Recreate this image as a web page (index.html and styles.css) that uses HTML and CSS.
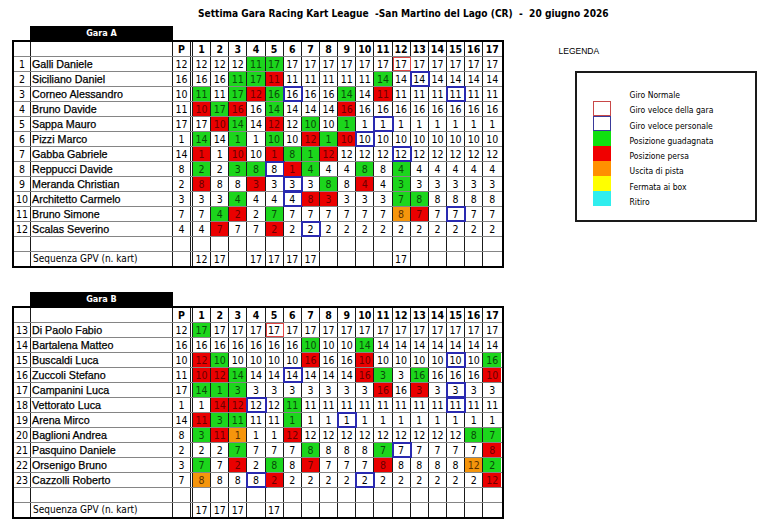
FILE: index.html
```html
<!DOCTYPE html>
<html lang="it">
<head>
<meta charset="utf-8">
<title>Settima Gara Racing Kart League</title>
<link rel="stylesheet" href="styles.css">
</head>
<body>
<div class="title">Settima Gara Racing Kart League  -San Martino del Lago (CR)  -  20 giugno 2026</div>
<div class="main">
  <div class="tables">
    <div class="bar">Gara A</div>
    <div class="sheet">
      <div class="row head"><span></span><span></span><span>P</span><span>1</span><span>2</span><span>3</span><span>4</span><span>5</span><span>6</span><span>7</span><span>8</span><span>9</span><span>10</span><span>11</span><span>12</span><span>13</span><span>14</span><span>15</span><span>16</span><span>17</span></div>
      <div class="row"><span>1</span><span class="nm">Galli Daniele</span><span>12</span><span>12</span><span>12</span><span>12</span><span class="g">11</span><span class="g">17</span><span>17</span><span>17</span><span>17</span><span>17</span><span>17</span><span>17</span><span class="f">17</span><span>17</span><span>17</span><span>17</span><span>17</span><span>17</span></div>
      <div class="row"><span>2</span><span class="nm">Siciliano Daniel</span><span>16</span><span>16</span><span>16</span><span class="g">11</span><span class="g">17</span><span class="r">11</span><span>11</span><span>11</span><span>11</span><span>11</span><span>11</span><span class="g">14</span><span>14</span><span class="b">14</span><span>14</span><span>14</span><span>14</span><span>14</span></div>
      <div class="row"><span>3</span><span class="nm">Corneo Alessandro</span><span>10</span><span class="g">11</span><span>11</span><span class="g">17</span><span class="r">12</span><span class="g">16</span><span class="b">16</span><span>16</span><span>16</span><span class="g">14</span><span>14</span><span class="r">11</span><span>11</span><span>11</span><span>11</span><span class="b">11</span><span>11</span><span>11</span></div>
      <div class="row"><span>4</span><span class="nm">Bruno Davide</span><span>11</span><span class="r">10</span><span class="g">17</span><span class="r">16</span><span>16</span><span class="g">14</span><span>14</span><span>14</span><span>14</span><span class="r">16</span><span>16</span><span>16</span><span>16</span><span>16</span><span>16</span><span>16</span><span>16</span><span>16</span></div>
      <div class="row"><span>5</span><span class="nm">Sappa Mauro</span><span>17</span><span>17</span><span class="r">10</span><span class="g">14</span><span>14</span><span class="r">12</span><span>12</span><span class="g">10</span><span>10</span><span class="g">1</span><span>1</span><span class="b">1</span><span>1</span><span>1</span><span>1</span><span>1</span><span>1</span><span>1</span></div>
      <div class="row"><span>6</span><span class="nm">Pizzi Marco</span><span>1</span><span class="g">14</span><span>14</span><span class="g">1</span><span>1</span><span class="g">10</span><span>10</span><span class="r">12</span><span class="g">1</span><span class="r">10</span><span class="b">10</span><span>10</span><span>10</span><span>10</span><span>10</span><span>10</span><span>10</span><span>10</span></div>
      <div class="row"><span>7</span><span class="nm">Gabba Gabriele</span><span>14</span><span class="r">1</span><span>1</span><span class="r">10</span><span>10</span><span class="r">1</span><span class="g">8</span><span class="g">1</span><span class="r">12</span><span>12</span><span>12</span><span>12</span><span class="b">12</span><span>12</span><span>12</span><span>12</span><span>12</span><span>12</span></div>
      <div class="row"><span>8</span><span class="nm">Reppucci Davide</span><span>8</span><span class="g">2</span><span>2</span><span class="g">3</span><span class="g">8</span><span class="b">8</span><span class="r">1</span><span class="g">4</span><span>4</span><span>4</span><span class="g">8</span><span>8</span><span class="g">4</span><span>4</span><span>4</span><span>4</span><span>4</span><span>4</span></div>
      <div class="row"><span>9</span><span class="nm">Meranda Christian</span><span>2</span><span class="r">8</span><span>8</span><span>8</span><span class="r">3</span><span>3</span><span class="b">3</span><span>3</span><span class="g">8</span><span>8</span><span class="r">4</span><span>4</span><span class="g">3</span><span>3</span><span>3</span><span>3</span><span>3</span><span>3</span></div>
      <div class="row"><span>10</span><span class="nm">Architetto Carmelo</span><span>3</span><span>3</span><span>3</span><span class="g">4</span><span>4</span><span>4</span><span class="b">4</span><span class="r">8</span><span class="r">3</span><span>3</span><span>3</span><span>3</span><span class="g">7</span><span class="g">8</span><span>8</span><span>8</span><span>8</span><span>8</span></div>
      <div class="row"><span>11</span><span class="nm">Bruno Simone</span><span>7</span><span>7</span><span class="g">4</span><span class="r">2</span><span>2</span><span class="g">7</span><span>7</span><span>7</span><span>7</span><span>7</span><span>7</span><span>7</span><span class="o">8</span><span class="r">7</span><span>7</span><span class="b">7</span><span>7</span><span>7</span></div>
      <div class="row"><span>12</span><span class="nm">Scalas Severino</span><span>4</span><span>4</span><span class="r">7</span><span>7</span><span>7</span><span class="r">2</span><span>2</span><span class="b">2</span><span>2</span><span>2</span><span>2</span><span>2</span><span>2</span><span>2</span><span>2</span><span>2</span><span>2</span><span>2</span></div>
      <div class="row"><span></span><span></span><span></span><span></span><span></span><span></span><span></span><span></span><span></span><span></span><span></span><span></span><span></span><span></span><span></span><span></span><span></span><span></span><span></span><span></span></div>
      <div class="row"><span></span><span class="nm sq">Sequenza GPV (n. kart)</span><span></span><span>12</span><span>17</span><span></span><span>17</span><span>17</span><span>17</span><span>17</span><span></span><span></span><span></span><span></span><span>17</span><span></span><span></span><span></span><span></span><span></span></div>
    </div>

    <div class="bar bar-b">Gara B</div>
    <div class="sheet">
      <div class="row head"><span></span><span></span><span>P</span><span>1</span><span>2</span><span>3</span><span>4</span><span>5</span><span>6</span><span>7</span><span>8</span><span>9</span><span>10</span><span>11</span><span>12</span><span>13</span><span>14</span><span>15</span><span>16</span><span>17</span></div>
      <div class="row"><span>13</span><span class="nm">Di Paolo Fabio</span><span>12</span><span class="g">17</span><span>17</span><span>17</span><span>17</span><span class="f">17</span><span>17</span><span>17</span><span>17</span><span>17</span><span>17</span><span>17</span><span>17</span><span>17</span><span>17</span><span>17</span><span>17</span><span>17</span></div>
      <div class="row"><span>14</span><span class="nm">Bartalena Matteo</span><span>16</span><span>16</span><span>16</span><span>16</span><span>16</span><span>16</span><span>16</span><span class="g">10</span><span>10</span><span>10</span><span class="g">14</span><span>14</span><span>14</span><span>14</span><span>14</span><span>14</span><span>14</span><span>14</span></div>
      <div class="row"><span>15</span><span class="nm">Buscaldi Luca</span><span>10</span><span class="r">12</span><span class="g">10</span><span>10</span><span>10</span><span>10</span><span>10</span><span class="r">16</span><span>16</span><span>16</span><span class="r">10</span><span>10</span><span>10</span><span>10</span><span>10</span><span class="b">10</span><span>10</span><span class="g">16</span></div>
      <div class="row"><span>16</span><span class="nm">Zuccoli Stefano</span><span>11</span><span class="r">10</span><span class="r">12</span><span class="g">14</span><span>14</span><span>14</span><span class="b">14</span><span>14</span><span>14</span><span>14</span><span class="r">16</span><span class="g">3</span><span>3</span><span class="g">16</span><span>16</span><span>16</span><span>16</span><span class="r">10</span></div>
      <div class="row"><span>17</span><span class="nm">Campanini Luca</span><span>17</span><span class="g">14</span><span class="g">1</span><span class="g">3</span><span>3</span><span>3</span><span>3</span><span>3</span><span>3</span><span>3</span><span>3</span><span class="r">16</span><span>16</span><span class="r">3</span><span>3</span><span class="b">3</span><span>3</span><span>3</span></div>
      <div class="row"><span>18</span><span class="nm">Vettorato Luca</span><span>1</span><span>1</span><span class="r">14</span><span class="r">12</span><span class="b">12</span><span>12</span><span class="g">11</span><span>11</span><span>11</span><span>11</span><span>11</span><span>11</span><span>11</span><span>11</span><span>11</span><span class="b">11</span><span>11</span><span>11</span></div>
      <div class="row"><span>19</span><span class="nm">Arena Mirco</span><span>14</span><span class="r">11</span><span class="g">3</span><span class="g">11</span><span>11</span><span>11</span><span class="g">1</span><span>1</span><span>1</span><span class="b">1</span><span>1</span><span>1</span><span>1</span><span>1</span><span>1</span><span>1</span><span>1</span><span>1</span></div>
      <div class="row"><span>20</span><span class="nm">Baglioni Andrea</span><span>8</span><span class="g">3</span><span class="r">11</span><span class="o">1</span><span>1</span><span>1</span><span class="r">12</span><span>12</span><span>12</span><span>12</span><span>12</span><span>12</span><span>12</span><span>12</span><span>12</span><span>12</span><span class="g">8</span><span class="g">7</span></div>
      <div class="row"><span>21</span><span class="nm">Pasquino Daniele</span><span>2</span><span>2</span><span>2</span><span class="g">7</span><span>7</span><span>7</span><span>7</span><span class="g">8</span><span>8</span><span>8</span><span>8</span><span class="g">7</span><span class="b">7</span><span>7</span><span>7</span><span>7</span><span>7</span><span class="r">8</span></div>
      <div class="row"><span>22</span><span class="nm">Orsenigo Bruno</span><span>3</span><span class="g">7</span><span>7</span><span class="r">2</span><span>2</span><span class="g">8</span><span>8</span><span class="r">7</span><span>7</span><span>7</span><span>7</span><span class="r">8</span><span>8</span><span>8</span><span>8</span><span>8</span><span class="o">12</span><span class="g">2</span></div>
      <div class="row"><span>23</span><span class="nm">Cazzolli Roberto</span><span>7</span><span class="o">8</span><span>8</span><span>8</span><span class="b">8</span><span class="r">2</span><span>2</span><span>2</span><span>2</span><span>2</span><span class="b">2</span><span>2</span><span>2</span><span>2</span><span>2</span><span>2</span><span>2</span><span class="r">12</span></div>
      <div class="row"><span></span><span></span><span></span><span></span><span></span><span></span><span></span><span></span><span></span><span></span><span></span><span></span><span></span><span></span><span></span><span></span><span></span><span></span><span></span><span></span></div>
      <div class="row"><span></span><span class="nm sq">Sequenza GPV (n. kart)</span><span></span><span>17</span><span>17</span><span>17</span><span></span><span>17</span><span></span><span></span><span></span><span></span><span></span><span></span><span></span><span></span><span></span><span></span><span></span><span></span></div>
    </div>
  </div>

  <div class="legend">
    <div class="legend-title">LEGENDA</div>
    <div class="legend-box">
      <div class="swatches">
        <div class="sw sw-fast"></div>
        <div class="sw sw-pers"></div>
        <div class="sw sw-g"></div>
        <div class="sw sw-r"></div>
        <div class="sw sw-o"></div>
        <div class="sw sw-y"></div>
        <div class="sw sw-c"></div>
      </div>
      <div class="labels">
        <div class="lb">Giro Normale</div>
        <div class="lb">Giro veloce della gara</div>
        <div class="lb">Giro veloce personale</div>
        <div class="lb">Posizione guadagnata</div>
        <div class="lb">Posizione persa</div>
        <div class="lb">Uscita di pista</div>
        <div class="lb">Fermata ai box</div>
        <div class="lb">Ritiro</div>
      </div>
    </div>
  </div>
</div>
</body>
</html>
```

FILE: styles.css
```css
* { box-sizing: border-box; }
body {
  margin: 0;
  background: #fff;
  color: #000;
  font-family: "DejaVu Sans Condensed", "DejaVu Sans", sans-serif;
  font-stretch: condensed;
}
.title {
  height: 26px;
  padding: 8px 0 0 198px;
  font-size: 10.1px;
  line-height: 12px;
  font-weight: bold;
  white-space: pre;
}
.main { display: flex; padding-left: 12px; }
.tables { display: flex; flex-direction: column; }
.bar {
  margin-left: 18px;
  width: 143px;
  height: 14px;
  background: #000;
  color: #fff;
  font-size: 9px;
  line-height: 14px;
  font-weight: bold;
  text-align: center;
}
.bar-b { margin-top: 24px; }
.sheet { width: 491.55px; border: 2px solid #000; }
.row {
  display: grid;
  grid-template-columns: 17px 142px 20px repeat(17, 18.15px);
  height: 15px;
  border-bottom: 1px solid #858585;
  font-size: 10.5px;
}
.row:last-child { height: 14px; border-bottom: 0; }
.row > span {
  display: flex;
  align-items: center;
  justify-content: center;
  border-right: 1px solid #1a1a1a;
  line-height: 1;
  white-space: nowrap;
}
.row > span:nth-child(3) { border-right: 3px double #1a1a1a; }
.row > span:last-child { border-right: 0; }
.head { font-weight: bold; }
.row > .nm {
  justify-content: flex-start;
  padding-left: 1px;
  font-family: "Liberation Sans", Arial, sans-serif;
  font-stretch: normal;
  font-size: 10.7px;
  -webkit-text-stroke: 0.25px #000;
}
.row > .sq {
  padding-left: 2px;
  font-family: "DejaVu Sans Condensed", "DejaVu Sans", sans-serif;
  font-stretch: condensed;
  font-size: 10px;
  -webkit-text-stroke: 0;
}
.g { background: #1cd61c; color: #0a4a0a; }
.r { background: #ea0000; color: #6a0000; }
.o { background: #f5950c; color: #5a3000; }
.b { outline: 2px solid #2a2ab0; outline-offset: -1px; }
.f { outline: 1.5px solid #e04646; outline-offset: -1px; }

.legend { margin-left: 55px; padding-top: 19px; }
.legend-title {
  font-family: "Liberation Sans", Arial, sans-serif;
  font-stretch: normal;
  font-size: 8.5px;
  line-height: 12px;
}
.legend-box {
  display: flex;
  margin: 14px 0 0 16px;
  width: 182px;
  height: 151px;
  border: 2px solid #1a1a1a;
}
.swatches { display: flex; flex-direction: column; margin-left: 16px; padding-top: 28px; }
.sw { width: 18px; height: 15px; }
.sw-fast { border: 1px solid #c84848; }
.sw-pers { border: 1px solid #3a3a9a; }
.sw-g { background: #10e010; }
.sw-r { background: #f00000; }
.sw-o { background: #ff9000; }
.sw-y { background: #ffff00; }
.sw-c { background: #30eeee; }
.labels { margin-left: 19px; padding-top: 15px; }
.lb { height: 15.3px; line-height: 15.3px; font-size: 8.5px; white-space: nowrap; }
```
